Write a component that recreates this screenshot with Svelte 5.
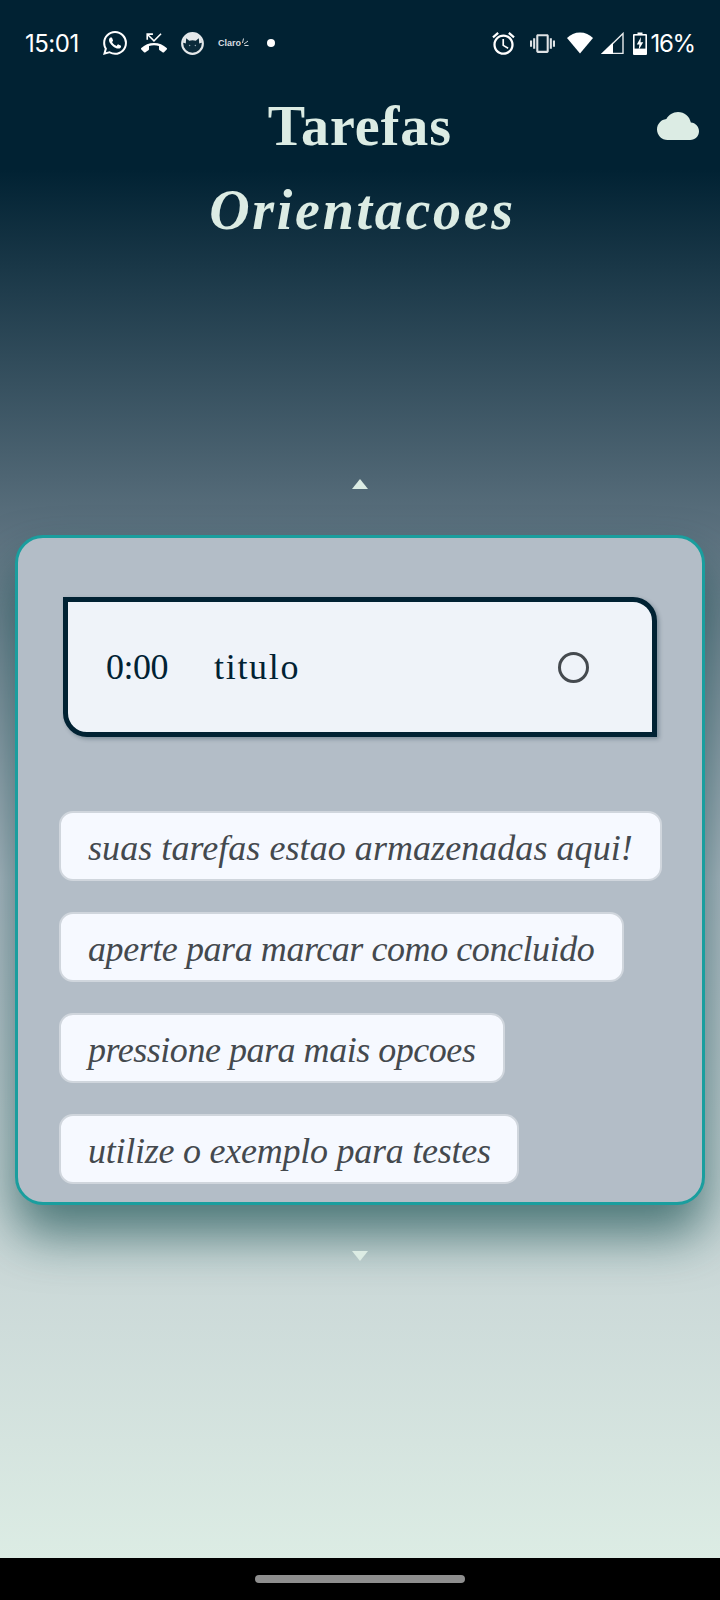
<script lang="ts">
	const tips = [
		{ text: 'suas tarefas estao armazenadas aqui!', width: 603, spacing: 0.06 },
		{ text: 'aperte para marcar como concluido', width: 565, spacing: -0.43 },
		{ text: 'pressione para mais opcoes', width: 446, spacing: -0.47 },
		{ text: 'utilize o exemplo para testes', width: 460, spacing: -0.25 }
	];
</script>

<div class="page">
	<main class="screen">
		<div class="statusbar">
			<div class="status-left">
				<span class="clock">15:01</span>
				<svg class="whatsapp" width="24" height="24" viewBox="0 0 24 24" fill="#fff">
					<path d="M17.472 14.382c-.297-.149-1.758-.867-2.03-.967-.273-.099-.471-.148-.67.15-.197.297-.767.966-.94 1.164-.173.199-.347.223-.644.075-.297-.15-1.255-.463-2.39-1.475-.883-.788-1.48-1.761-1.653-2.059-.173-.297-.018-.458.13-.606.134-.133.298-.347.446-.52.149-.174.198-.298.298-.497.099-.198.05-.371-.025-.52-.075-.149-.669-1.612-.916-2.207-.242-.579-.487-.5-.669-.51-.173-.008-.371-.01-.57-.01-.198 0-.52.074-.792.372-.272.297-1.04 1.016-1.04 2.479 0 1.462 1.065 2.875 1.213 3.074.149.198 2.096 3.2 5.077 4.487.709.306 1.262.489 1.694.625.712.227 1.36.195 1.871.118.571-.085 1.758-.719 2.006-1.413.248-.694.248-1.289.173-1.413-.074-.124-.272-.198-.57-.347m-5.421 7.403h-.004a9.87 9.87 0 01-5.031-1.378l-.361-.214-3.741.982.998-3.648-.235-.374a9.86 9.86 0 01-1.51-5.26c.001-5.45 4.436-9.884 9.888-9.884 2.64 0 5.122 1.03 6.988 2.898a9.825 9.825 0 012.893 6.994c-.003 5.45-4.437 9.884-9.885 9.884m8.413-18.297A11.815 11.815 0 0012.05 0C5.495 0 .16 5.335.157 11.892c0 2.096.547 4.142 1.588 5.945L.057 24l6.305-1.654a11.882 11.882 0 005.683 1.448h.005c6.554 0 11.89-5.335 11.893-11.893a11.821 11.821 0 00-3.48-8.413z" />
				</svg>
				<svg width="26" height="26" viewBox="0 0 24 24" fill="#fff">
					<path d="M6.5 5.5L12 11l7-7-1-1-6 6-4.5-4.5H11V3H5v6h1.5V5.5zm17.21 11.17C20.66 13.78 16.54 12 12 12 7.46 12 3.34 13.78.29 16.67c-.18.18-.29.43-.29.71s.11.53.29.71l2.48 2.48c.18.18.43.29.71.29.27 0 .52-.11.7-.28.79-.74 1.69-1.36 2.66-1.85.33-.16.56-.5.56-.9v-3.1c1.45-.47 3-.73 4.6-.73 1.6 0 3.15.26 4.6.72v3.1c0 .39.23.74.56.9.98.49 1.87 1.12 2.67 1.85.18.18.43.28.7.28.28 0 .53-.11.71-.29l2.48-2.48c.18-.18.29-.43.29-.71s-.12-.52-.3-.7z" />
				</svg>
				<svg class="cat" width="23" height="23" viewBox="0 0 24 24">
					<circle cx="12" cy="12" r="10.8" fill="#0b2a3a" stroke="#e4e8ea" stroke-width="2.2" />
					<path d="M2 11 Q3 2 12 1.6 Q21 2 22 11 L19 12 L18.6 6.6 L15.4 9 Q12 8.2 8.6 9 L5.4 6.6 L5 12 Z" fill="#e4e8ea" />
					<circle cx="9" cy="14" r="0.8" fill="#8fa3ad" />
					<circle cx="15" cy="14" r="0.8" fill="#8fa3ad" />
				</svg>
				<span class="carrier">
					Claro<svg width="8" height="9" viewBox="0 0 8 9" stroke="#d8dde0" stroke-width="1"><path d="M1.5 5 L2.5 0.5 M3 6 L7 3 M3.5 7.5 L7.5 7.5" /></svg>
				</span>
				<span class="dot"></span>
			</div>
			<div class="status-right">
				<svg class="alarm" width="27" height="27" viewBox="0 0 24 24" fill="#fff">
					<path d="M22 5.72l-4.6-3.86-1.29 1.53 4.6 3.86L22 5.72zM7.88 3.39L6.6 1.86 2 5.71l1.29 1.53 4.59-3.85zM12.5 8H11v6l4.75 2.85.75-1.23-4-2.37V8zM12 4c-4.97 0-9 4.03-9 9s4.02 9 9 9c4.97 0 9-4.03 9-9s-4.03-9-9-9zm0 16c-3.87 0-7-3.13-7-7s3.13-7 7-7 7 3.13 7 7-3.13 7-7 7z" />
				</svg>
				<svg class="vibrate" width="25" height="25" viewBox="0 0 24 24" fill="#dfe3e6">
					<path d="M0 15h2V9H0v6zm3 2h2V7H3v10zm19-8v6h2V9h-2zm-3 8h2V7h-2v10zM16.5 3h-9C6.67 3 6 3.67 6 4.5v15c0 .83.67 1.5 1.5 1.5h9c.83 0 1.5-.67 1.5-1.5v-15c0-.83-.67-1.5-1.5-1.5zM16 19H8V5h8v14z" />
				</svg>
				<svg class="wifi" width="26" height="22" viewBox="0 0 26 22" fill="#fff">
					<path d="M13 21.5 L0 6 C3.4 2.4 8 .4 13 .4 S22.6 2.4 26 6 Z" />
				</svg>
				<svg class="signal" width="23" height="22" viewBox="0 0 23 22">
					<path d="M22 1.5 V21.5 H1.5 Z" fill="none" stroke="#e8ebed" stroke-width="1.4" />
					<path d="M12 10.5 V22 H0 Z" fill="#fff" />
				</svg>
				<svg class="power" width="14" height="23" viewBox="0 0 14 23">
					<path d="M4.5 0.5 H9.5 V2 H13 Q14 2 14 3 V22 Q14 23 13 23 H1 Q0 23 0 22 V3 Q0 2 1 2 H4.5 Z" fill="#fff" />
					<rect x="1.6" y="3.6" width="10.8" height="13" fill="#012233" />
					<path d="M8 5 L3.8 12.6 H6.4 L5.6 18 L10.2 10.2 H7.5 Z" fill="#fff" />
				</svg>
				<span class="battery">16%</span>
			</div>
		</div>

		<header class="heading">
			<h1>Tarefas</h1>
			<svg class="cloud" width="42" height="28" viewBox="0 4 24 16" fill="#dcece4">
				<path d="M19.35 10.04C18.67 6.59 15.64 4 12 4 9.11 4 6.6 5.64 5.35 8.04 2.34 8.36 0 10.91 0 14c0 3.31 2.69 6 6 6h13c2.76 0 5-2.24 5-5 0-2.64-2.05-4.78-4.65-4.96z" />
			</svg>
		</header>
		<h2>Orientacoes</h2>

		<div class="arrow up"></div>

		<section class="card">
			<div class="task">
				<span class="time">0:00</span>
				<span class="title">titulo</span>
				<span class="check"></span>
			</div>
			<ul class="tips">
				{#each tips as tip}
					<li style:width={tip.width + 'px'} style:letter-spacing={tip.spacing + 'px'}>{tip.text}</li>
				{/each}
			</ul>
		</section>

		<div class="arrow down"></div>
	</main>
	<footer class="navbar">
		<span class="handle"></span>
	</footer>
</div>

<style>
	:global(body) {
		margin: 0;
		background: #000;
	}
	.page {
		width: 720px;
		height: 1600px;
		display: flex;
		flex-direction: column;
		overflow: hidden;
	}
	.screen {
		height: 1558px;
		box-sizing: border-box;
		display: flex;
		flex-direction: column;
		align-items: center;
		background: linear-gradient(180deg, #012233 0, #012233 170px, #b3bdc7 880px, #dcece4 1558px);
	}
	.statusbar {
		width: 100%;
		height: 86px;
		box-sizing: border-box;
		padding: 0 25px;
		display: flex;
		align-items: center;
		justify-content: space-between;
		color: #fff;
		font-family: Inter, sans-serif;
		font-size: 24px;
	}
	.status-left,
	.status-right {
		display: flex;
		align-items: center;
		gap: 14px;
	}
	.status-right {
		gap: 0;
	}
	.clock {
		width: 53px;
		letter-spacing: -0.5px;
	}
	.whatsapp {
		margin-left: 11px;
	}
	.carrier {
		display: flex;
		align-items: flex-start;
		font-family: 'Liberation Sans', sans-serif;
		font-size: 9px;
		font-weight: 700;
		color: #d8dde0;
	}
	.dot {
		width: 8px;
		height: 8px;
		border-radius: 50%;
		background: #fff;
		margin-left: 4px;
	}
	.vibrate {
		margin-left: 13px;
	}
	.wifi {
		margin-left: 12px;
	}
	.signal {
		margin-left: 8px;
	}
	.power {
		margin-left: 9px;
	}
	.battery {
		margin-left: 3px;
		letter-spacing: -1.2px;
	}
	.heading {
		width: 100%;
		height: 80px;
		display: grid;
		grid-template-columns: 1fr auto 1fr;
		align-items: center;
	}
	h1,
	h2 {
		margin: 0;
		color: #dcece4;
		font-family: 'Liberation Serif', serif;
		font-size: 56px;
		line-height: 80px;
		font-weight: 700;
	}
	h1 {
		grid-column: 2;
		letter-spacing: 1px;
	}
	.cloud {
		justify-self: end;
		margin-right: 21px;
	}
	h2 {
		font-style: italic;
		letter-spacing: 2.7px;
		margin-top: 4px;
		padding-left: 5px;
	}
	.arrow {
		width: 0;
		height: 0;
		border-left: 8.5px solid transparent;
		border-right: 8.5px solid transparent;
	}
	.arrow.up {
		margin-top: 229px;
		border-bottom: 10px solid #dcece4;
	}
	.arrow.down {
		margin-top: 46px;
		border-top: 10px solid #dcece4;
	}
	.card {
		width: 690px;
		height: 670px;
		margin-top: 46px;
		box-sizing: border-box;
		padding: 59px 45px 0;
		border: 3px solid #1a9e9e;
		border-radius: 28px;
		background: #b3bdc7;
		box-shadow: 0 30px 50px rgba(10, 70, 70, 0.65);
	}
	.task {
		height: 140px;
		box-sizing: border-box;
		padding: 0 63px 0 38px;
		display: flex;
		align-items: center;
		border: 5px solid #012233;
		border-radius: 0 24px 0 24px;
		background: #eff3f9;
		box-shadow: 2px 2px 4px rgba(1, 34, 51, 0.3);
		color: #012233;
		font-family: 'Liberation Serif', serif;
		font-size: 36px;
	}
	.time {
		letter-spacing: -0.5px;
	}
	.title {
		margin-left: 46px;
		letter-spacing: 1.7px;
	}
	.check {
		width: 25px;
		height: 25px;
		margin-left: auto;
		border: 3px solid #454a4f;
		border-radius: 50%;
	}
	.tips {
		list-style: none;
		margin: 74px 0 0 -4px;
		padding: 0;
		display: flex;
		flex-direction: column;
		gap: 31px;
	}
	.tips li {
		height: 70px;
		box-sizing: border-box;
		padding: 3px 0 0 27px;
		display: flex;
		align-items: center;
		border: 2px solid #d0d6dd;
		border-radius: 14px;
		background: #f6f9ff;
		color: #44494e;
		font-family: 'Liberation Serif', serif;
		font-style: italic;
		font-size: 36px;
		white-space: nowrap;
	}
	.navbar {
		flex: 1;
		display: flex;
		align-items: center;
		justify-content: center;
		background: #000;
	}
	.handle {
		width: 210px;
		height: 8px;
		border-radius: 4px;
		background: #8e8e8e;
	}
</style>
